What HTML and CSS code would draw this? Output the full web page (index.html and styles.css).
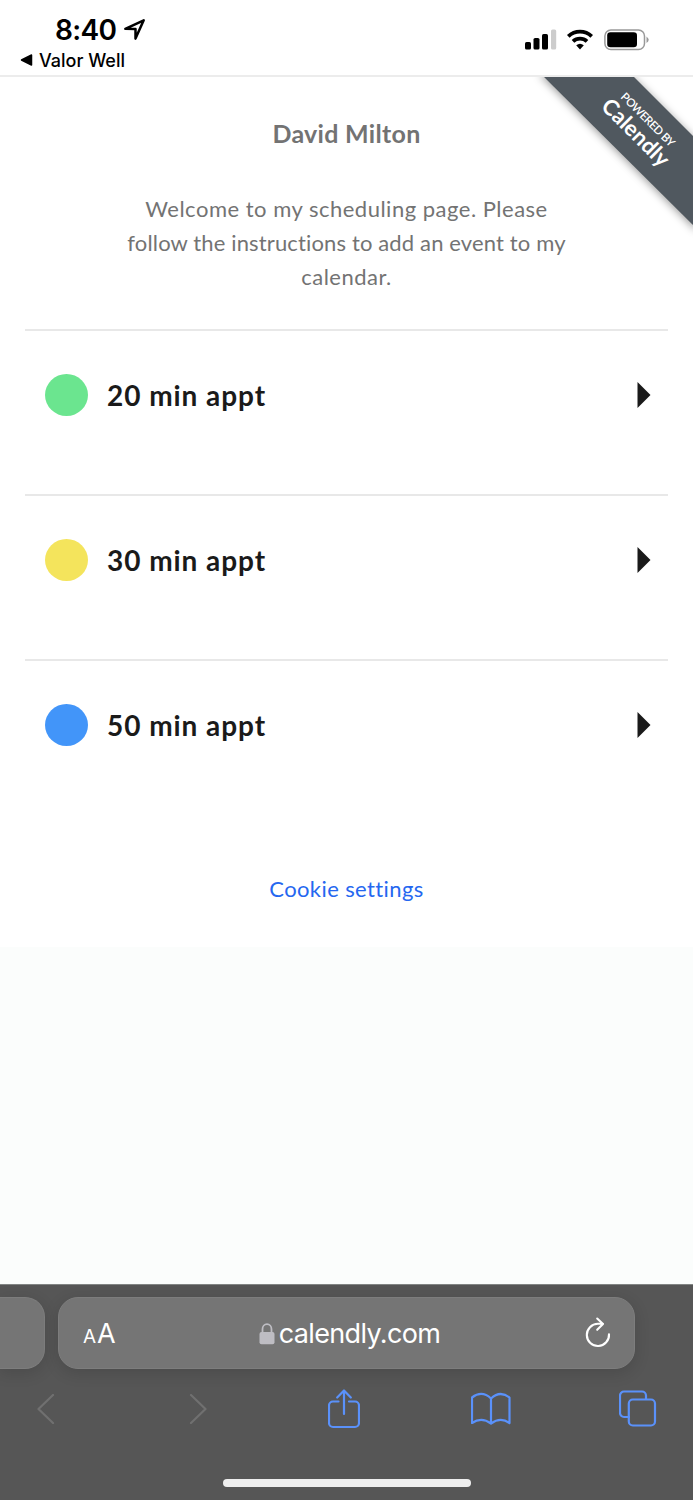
FILE: index.html
```html
<!DOCTYPE html>
<html lang="en">
<head>
<meta charset="utf-8">
<title>Calendly - David Milton</title>
<link rel="stylesheet" href="styles.css">
</head>
<body>
<div class="screen">
  <header class="status">
    <div class="status-left">
      <div class="time"><span>8:40</span>
        <svg width="24" height="24" viewBox="0 0 24 24"><path d="M2.300 10.800 20.700 2.300 12.500 20.600V11Z" fill="none" stroke="#000" stroke-width="2.500" stroke-linejoin="round"/></svg>
      </div>
      <div class="back"><svg width="13" height="12" viewBox="0 0 13 12"><path d="M1.500 6 11.500 1v10Z" stroke="#000" stroke-width="1.500" stroke-linejoin="round"/></svg><span>Valor Well</span></div>
    </div>
    <svg class="status-icons" width="126" height="24" viewBox="0 0 126 24">
      <rect x="1" y="14" width="6" height="7.500" rx="1.600"/><rect x="9.500" y="10" width="6" height="11.500" rx="1.600"/><rect x="18" y="6" width="6" height="15.500" rx="1.600"/><rect x="27" y="1.500" width="5.200" height="20" rx="1.600" fill="#ccc"/>
      <g fill="none" stroke="#000" stroke-width="3.800"><path d="M44.300 8.300a17 17 0 0 1 23.400 0"/><path d="M49 13.300a10.300 10.300 0 0 1 14 0"/></g>
      <path d="M52.200 17.300q3.800-3 7.600 0L56 21.500Z"/>
      <rect x="80.900" y="2" width="39.600" height="19.500" rx="6" fill="none" stroke="#999" stroke-width="1.500"/><rect x="83.200" y="4.300" width="29.800" height="15" rx="3.300"/><path d="M122.500 8.500q4.400 3.300 0 6.600Z" fill="#999"/>
    </svg>
  </header>
  <main class="page">
    <svg class="ribbon" width="170" height="170" viewBox="0 0 170 170">
      <path class="ribbon-band" d="M16-5H106L174 63V152Z"/>
      <text class="powered" transform="translate(97 20.500) rotate(45)" textLength="71">POWERED BY</text>
      <text class="brand" transform="translate(77 30.500) rotate(45)" textLength="86">Calendly</text>
    </svg>
    <h1>David Milton</h1>
    <p class="intro">Welcome to my scheduling page. Please<br><span class="tight">follow the instructions to add an event to my</span><br>calendar.</p>
    <ul class="events">
      <li><span class="dot green"></span><span class="name">20 min appt</span><svg width="15" height="26" viewBox="0 0 15 26"><path d="M.5 0 13.500 13 .5 26Z"/></svg></li>
      <li><span class="dot yellow"></span><span class="name">30 min appt</span><svg width="15" height="26" viewBox="0 0 15 26"><path d="M.5 0 13.500 13 .5 26Z"/></svg></li>
      <li><span class="dot blue"></span><span class="name">50 min appt</span><svg width="15" height="26" viewBox="0 0 15 26"><path d="M.5 0 13.500 13 .5 26Z"/></svg></li>
    </ul>
    <a class="cookie">Cookie settings</a>
  </main>
  <div class="backdrop"></div>
  <footer class="browser">
    <div class="tabs">
      <div class="previous"></div>
      <div class="address">
        <span class="aa"><small>A</small>A</span>
        <span class="url"><svg width="16" height="22" viewBox="0 0 16 22"><path d="M3.500 10V6.200a4.500 5 0 0 1 9 0V10" fill="none" stroke="#bebdc3" stroke-width="1.800"/><rect x=".5" y="9" width="15" height="12.300" rx="2" fill="#bebdc3"/></svg><span>calendly.com</span></span>
        <svg class="reload" width="26" height="32" viewBox="0 0 26 32"><path d="M24 17.200A11.100 11.100 0 1 1 12.900 6.800H18M12.200 1.500l5.800 5.500-5.800 5.800" fill="none" stroke="#fff" stroke-width="2.100" stroke-linecap="round" stroke-linejoin="round"/></svg>
      </div>
    </div>
    <nav class="tools">
      <svg class="dim" width="18" height="30" viewBox="0 0 18 30"><path d="M16 1 1.500 15 16 29"/></svg>
      <svg class="dim forward" width="18" height="30" viewBox="0 0 18 30"><path d="m2 1 14.500 14L2 29"/></svg>
      <svg class="share" width="32" height="40" viewBox="0 0 32 40"><path d="M10.500 12.500H5a4 4 0 0 0-4 4V34a4 4 0 0 0 4 4h22a4 4 0 0 0 4-4V16.500a4 4 0 0 0-4-4h-6M16 25V2M9.200 8.500 16 1.500l6.800 7"/></svg>
      <svg class="book" width="40" height="34" viewBox="0 0 40 34"><path d="M20 6.500Q11-2 1 5.500V31q9.500-6.500 19 .5 9.500-7 18.500-.5V5.500Q29-2 20 6.500v25"/></svg>
      <svg class="copies" width="38" height="38" viewBox="0 0 38 38"><path d="M10 27H5a4 4 0 0 1-4-4V5.500a4 4 0 0 1 4-4h18a4 4 0 0 1 4 4V9"/><rect x="9.800" y="9.500" width="26.200" height="26" rx="4"/></svg>
    </nav>
    <div class="home"></div>
  </footer>
</div>
</body>
</html>
```
FILE: styles.css
```css
* { box-sizing: border-box; }
body { margin: 0; background: #fff; }
.screen { width: 693px; height: 1500px; display: flex; flex-direction: column; overflow: hidden; font-family: Lato, "Open Sans", sans-serif; }
.status { height: 77px; border-bottom: 2px solid #ececec; display: flex; justify-content: space-between; padding: 14px 43px 0 20px; font-family: Inter, sans-serif; color: #000; }
.status-left { display: flex; flex-direction: column; }
.time { display: flex; align-items: center; height: 31px; padding-left: 35px; gap: 7px; font-size: 28px; font-weight: 600; }
.time span { letter-spacing: -0.7px; }
.back { display: flex; align-items: center; gap: 6px; height: 32px; font-size: 18px; font-weight: 500; }
.status-icons { margin-top: 14px; }
.page { position: relative; height: 870px; display: flex; flex-direction: column; align-items: center; }
.ribbon { position: absolute; right: 0; top: 0; overflow: hidden; }
.ribbon-band { fill: #50585f; filter: drop-shadow(0 2px 4px #0006); }
.ribbon text { fill: #fff; }
.powered { font-size: 11.5px; font-weight: 600; }
.brand { font-size: 22px; font-weight: 700; }
h1 { margin: 41px 0 0; font-size: 25px; line-height: 30px; font-weight: 700; color: #737373; letter-spacing: 0.3px; }
.intro { margin: 44px 0 0; font-size: 22px; line-height: 34px; color: #737373; text-align: center; white-space: nowrap; letter-spacing: 0.5px; }
.tight { letter-spacing: 0.14px; }
.events { list-style: none; width: 643px; margin: 35px 0 0; padding: 0; }
.events li { height: 165px; border-top: 2px solid #e8e8e8; display: flex; align-items: flex-start; padding: 43px 16px 0 20px; }
.dot { width: 43px; height: 42px; border-radius: 50%; }
.green { background: #6be58f; }
.yellow { background: #f4e45c; }
.blue { background: #4295f9; }
.name { flex: 1; margin-left: 19px; font-size: 28px; line-height: 42px; font-weight: 700; color: #1a1a1a; letter-spacing: 0.95px; }
.events svg { margin-top: 8px; fill: #1a1a1a; }
.cookie { margin-top: 50px; font-size: 22px; line-height: 30px; color: #2567f0; letter-spacing: 0.4px; }
.backdrop { height: 337px; background: #fbfdfc; }
.browser { height: 216px; background: #565656; border-top: 1px solid #828584; display: flex; flex-direction: column; }
.tabs { display: flex; gap: 13px; padding-top: 12px; }
.previous { width: 45px; height: 72px; border: 1px solid #7d7d7d; border-left: 0; border-radius: 0 20px 20px 0; background: #757575; box-shadow: 0 4px 16px #0002; }
.address { width: 577px; height: 72px; border: 1px solid #7d7d7d; border-radius: 20px; background: #757575; box-shadow: 0 4px 16px #0002; display: flex; align-items: center; justify-content: space-between; padding: 0 23px 0 24px; font-family: Inter, sans-serif; color: #fff; }
.aa { width: 34px; font-size: 27px; white-space: nowrap; padding-top: 1px; }
.aa small { font-size: 19px; margin-right: 1px; }
.url { display: flex; align-items: center; gap: 4px; font-size: 27px; letter-spacing: -0.65px; padding: 1px 3px 0 0; }
.tools { display: flex; align-items: center; height: 80px; padding: 0 36px 0 37px; }
.tools svg { fill: none; stroke: #5a91fa; stroke-width: 2.2; stroke-linecap: round; stroke-linejoin: round; }
.tools .dim { stroke: #707070; }
.forward { margin-left: 134px; }
.share { margin-left: 121px; }
.book { margin-left: 111px; }
.copies { margin-left: 108px; }
.home { width: 248px; height: 8px; margin: 30px 0 0 223px; border-radius: 4px; background: #eee; }
```
